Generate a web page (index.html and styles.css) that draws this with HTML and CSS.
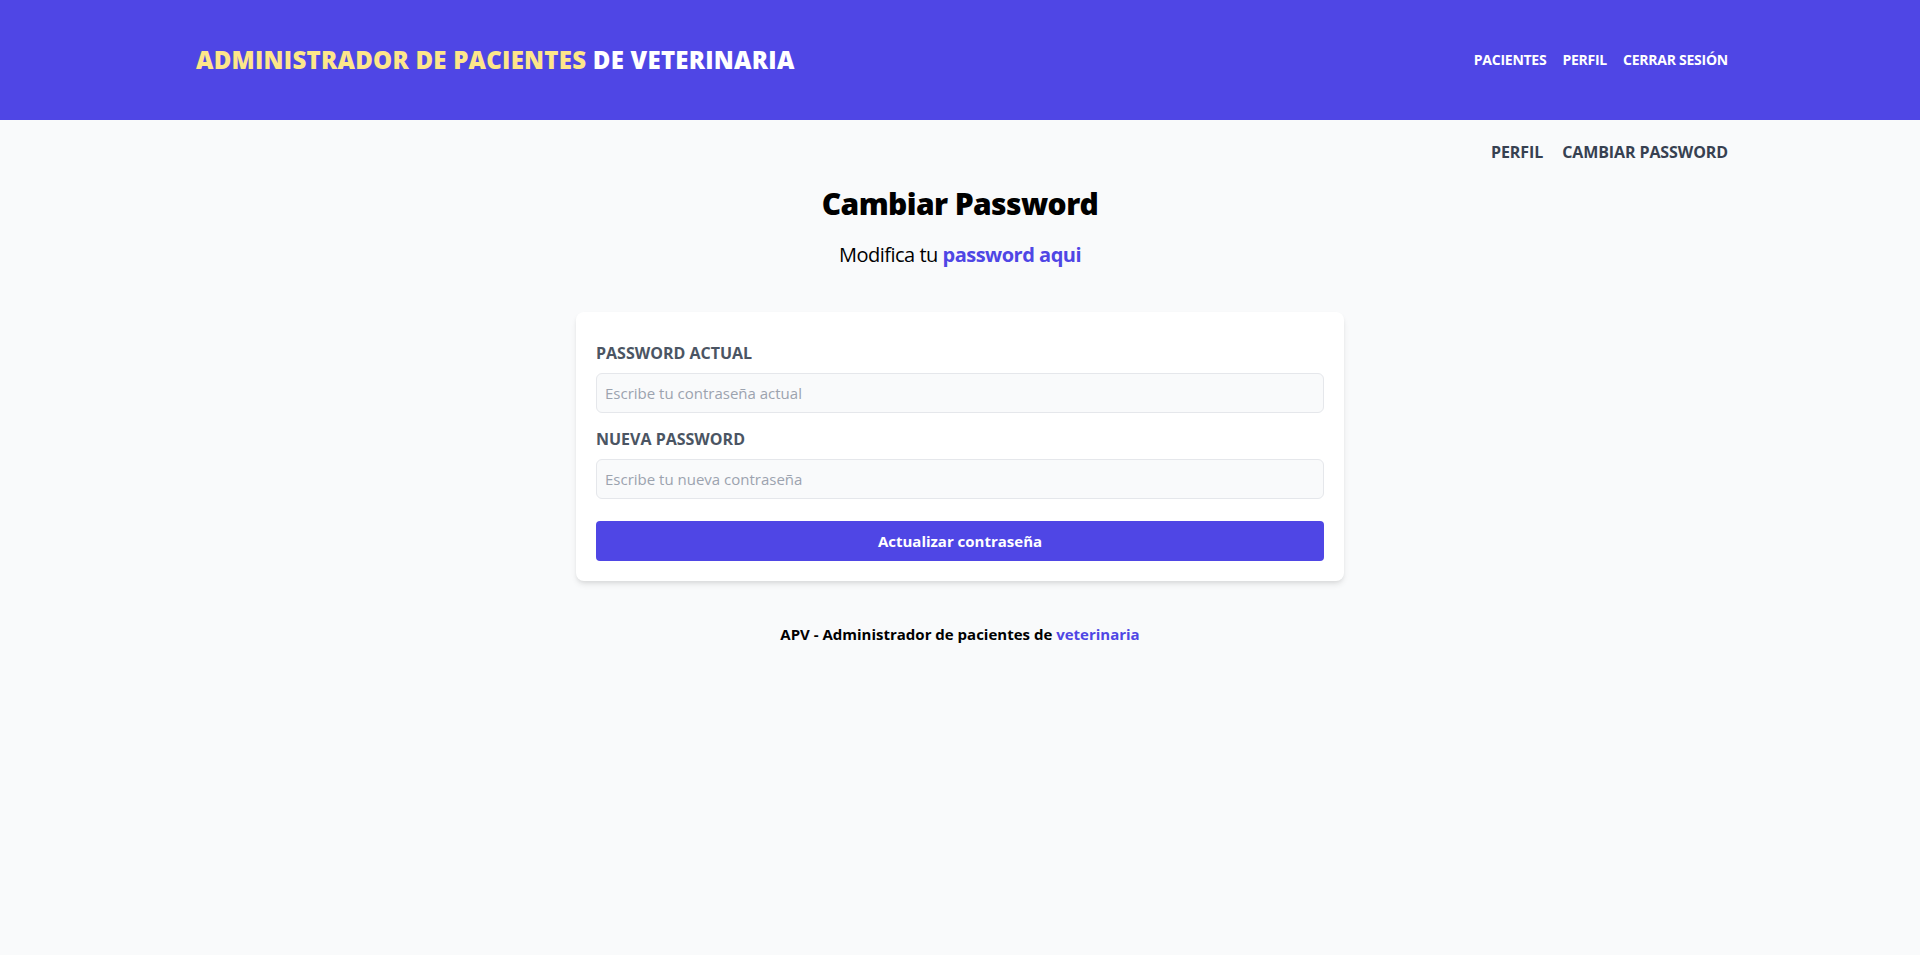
FILE: index.html
```html
<!DOCTYPE html>
<html lang="es">
<head>
<meta charset="utf-8">
<title>APV - Cambiar Password</title>
<link rel="stylesheet" href="styles.css">
</head>
<body>
<header class="header">
  <div class="container header-inner">
    <h1 class="brand"><span class="brand-yellow">Administrador de Pacientes</span> <span class="brand-white">de Veterinaria</span></h1>
    <nav class="main-nav">
      <a href="#">Pacientes</a>
      <a href="#">Perfil</a>
      <a href="#">Cerrar Sesión</a>
    </nav>
  </div>
</header>
<main class="container main">
  <nav class="sub-nav">
    <a href="#">Perfil</a>
    <a href="#">Cambiar Password</a>
  </nav>
  <h2 class="page-title">Cambiar Password</h2>
  <p class="page-subtitle">Modifica tu <span class="accent">password aqui</span></p>
  <div class="card">
    <form class="form">
      <div class="field field-first">
        <label class="label" for="actual">Password Actual</label>
        <input class="input" id="actual" type="password" placeholder="Escribe tu contraseña actual">
      </div>
      <div class="field">
        <label class="label" for="nueva">Nueva Password</label>
        <input class="input" id="nueva" type="password" placeholder="Escribe tu nueva contraseña">
      </div>
      <button class="submit" type="submit">Actualizar contraseña</button>
    </form>
  </div>
</main>
<footer class="footer">
  <p>APV - Administrador de pacientes de <span class="accent">veterinaria</span></p>
</footer>
</body>
</html>
```

FILE: styles.css
```css
* { box-sizing: border-box; }
html, body { margin: 0; padding: 0; }
body {
  background: #f9fafb;
  font-family: "Open Sans", "Noto Sans", "Liberation Sans", sans-serif;
  color: #000;
  min-height: 955px;
}
a { text-decoration: none; color: inherit; }
.container {
  width: 1536px;
  margin: 0 auto;
}
.header {
  background: #4f46e5;
  padding: 44px 0;
}
.header-inner {
  display: flex;
  justify-content: space-between;
  align-items: center;
  height: 32px;
}
.brand {
  margin: 0 0 0 4px;
  font-size: 24px;
  line-height: 32px;
  font-weight: 800;
  letter-spacing: 0.25px;
  text-transform: uppercase;
}
.brand-yellow { color: #fde68a; }
.brand-white { color: #fff; }
.main-nav {
  display: flex;
  gap: 16px;
}
.main-nav a {
  color: #fff;
  font-size: 14px;
  line-height: 20px;
  font-weight: 700;
  letter-spacing: -0.25px;
  text-transform: uppercase;
}
.main { display: flex; flex-direction: column; }
.sub-nav {
  display: flex;
  justify-content: flex-end;
  gap: 19px;
  margin-top: 20px;
}
.sub-nav a {
  color: #374151;
  font-size: 16px;
  line-height: 24px;
  font-weight: 700;
  letter-spacing: -0.1px;
  text-transform: uppercase;
}
.page-title {
  margin: 22px 0 0;
  text-align: center;
  font-size: 30px;
  line-height: 36px;
  font-weight: 800;
  letter-spacing: -0.6px;
}
.page-subtitle {
  margin: 19px 0 0;
  text-align: center;
  font-size: 20px;
  line-height: 28px;
  letter-spacing: -0.5px;
}
.accent { color: #4f46e5; font-weight: 700; }
.card {
  width: 768px;
  margin: 43px auto 0;
  background: #fff;
  border-radius: 8px;
  box-shadow: 0 4px 6px -1px rgba(0,0,0,0.1), 0 2px 4px -1px rgba(0,0,0,0.06);
  padding: 20px;
}
.form { display: flex; flex-direction: column; }
.field { display: flex; flex-direction: column; margin-top: 14px; }
.field-first { margin-top: 9px; }
.label {
  color: #4b5563;
  font-size: 16px;
  line-height: 24px;
  font-weight: 700;
  text-transform: uppercase;
}
.input {
  margin-top: 8px;
  height: 40px;
  padding: 8px;
  border: 1px solid #e5e7eb;
  border-radius: 6px;
  background: #f9fafb;
  font-family: inherit;
  font-size: 15px;
  color: #111827;
}
.input::placeholder { color: #9ca3af; }
.submit {
  margin-top: 22px;
  height: 40px;
  border: 0;
  border-radius: 4px;
  background: #4f46e5;
  color: #fff;
  font-family: inherit;
  font-size: 15px;
  font-weight: 700;
  cursor: pointer;
}
.footer {
  text-align: center;
  margin-top: 43px;
}
.footer p {
  margin: 0;
  font-size: 15px;
  line-height: 20px;
  font-weight: 700;
}
.footer .accent { font-weight: 700; }
```
